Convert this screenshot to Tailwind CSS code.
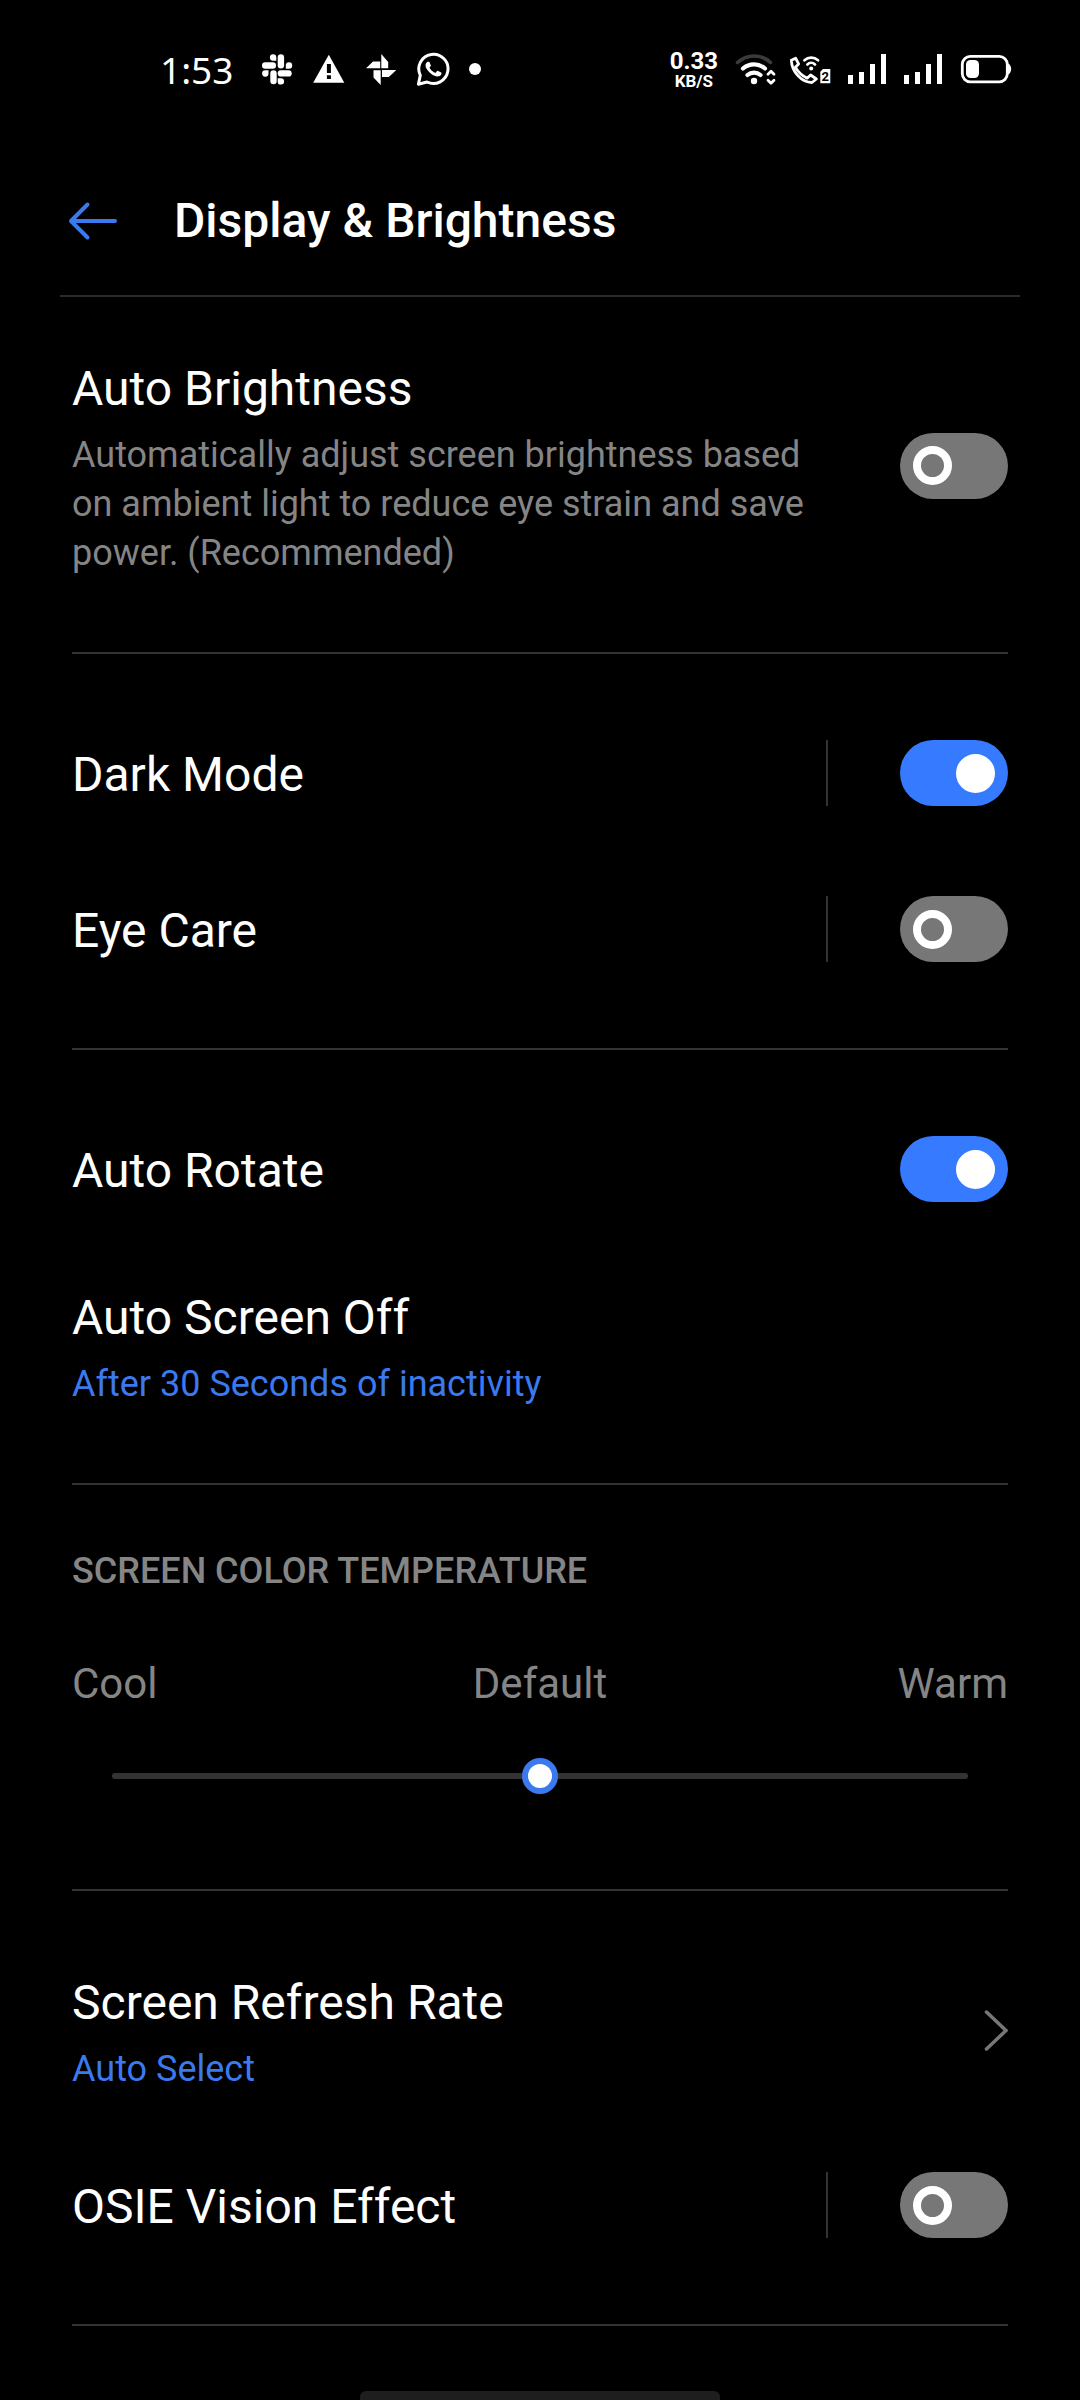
<!DOCTYPE html>
<html lang="en">
<head>
<meta charset="utf-8">
<meta name="viewport" content="width=device-width, initial-scale=1">
<title>Display &amp; Brightness</title>
<script src="https://cdn.jsdelivr.net/npm/@tailwindcss/browser@4"></script>
</head>
<body class="bg-black text-white font-[Roboto,sans-serif]">
<div class="flex min-h-screen flex-col">

  <!-- Status bar -->
  <div class="flex h-[140px] items-center justify-between pl-[160px] pr-[68px]">
    <div class="flex items-center gap-4">
      <time class="mr-2.5 font-['Noto_Sans',sans-serif] text-[37px] leading-9">1:53</time>
      <svg class="size-9" viewBox="0 0 36 36" fill="#fff" aria-label="Slack">
        <rect x="18.7" y="2.3" width="6.4" height="14.2" rx="3.2"/>
        <rect x="3" y="10.3" width="14" height="6.4" rx="3.2"/>
        <rect x="11.3" y="18.3" width="6.4" height="14" rx="3.2"/>
        <rect x="18.7" y="18.3" width="14" height="6.2" rx="3.1"/>
        <path d="M17.3 8.7h-2.8a3.2 3.2 0 1 1 2.8-3.2zM9.5 18.3v3a3.2 3.2 0 1 1-3.2-3zM26.8 16.7v-3a3.2 3.2 0 1 1 3.2 3zM18.7 26.2h3a3.2 3.2 0 1 1-3 3.2z"/>
      </svg>
      <svg class="size-9" viewBox="0 0 36 36" aria-label="Warning">
        <path fill="#fff" d="M17.8 2.7 33.3 30.7H2.2z"/>
        <path fill="#000" d="M15.9 12h4v9h-4zM15.9 23.2h4v3.8h-4z"/>
      </svg>
      <svg class="size-9" viewBox="0 0 36 36" fill="#fff" aria-label="Photos">
        <path d="M18.3 2l6.9 8v6.3h-6.9zM3 16.3l7-6.8h7.2v6.8zM17.7 33l-7.2-7.5v-7.2h7.2zM33.3 18l-7.5 7H19v-7z"/>
      </svg>
      <svg class="size-9" viewBox="0 0 36 36" aria-label="WhatsApp">
        <path fill="none" stroke="#fff" stroke-width="3" stroke-linejoin="round" d="M3.4 32.2 5.3 23.3A14.6 14.6 0 1 1 12 30z"/>
        <path fill="#fff" transform="translate(2.6 1.2) scale(1.32)" d="M17.472 14.382c-.297-.149-1.758-.867-2.03-.967-.273-.099-.471-.148-.67.15-.197.297-.767.966-.94 1.164-.173.199-.347.223-.644.075-.297-.15-1.255-.463-2.39-1.475-.883-.788-1.48-1.761-1.653-2.059-.173-.297-.018-.458.13-.606.134-.133.298-.347.446-.52.149-.174.198-.298.298-.497.099-.198.05-.371-.025-.52-.075-.149-.669-1.612-.916-2.207-.242-.579-.487-.5-.669-.51-.173-.008-.371-.01-.57-.01-.198 0-.52.074-.792.372-.272.297-1.04 1.016-1.04 2.479 0 1.462 1.065 2.875 1.213 3.074.149.198 2.096 3.2 5.077 4.487.709.306 1.262.489 1.694.625.712.227 1.36.195 1.871.118.571-.085 1.758-.719 2.006-1.413.248-.694.248-1.289.173-1.413-.074-.124-.272-.198-.57-.347"/>
      </svg>
      <svg class="h-9 w-4" viewBox="0 0 16 36" fill="#fff" aria-label="More notifications"><circle cx="8" cy="17" r="6"/></svg>
    </div>
    <div class="flex items-center gap-3.5">
      <div class="flex flex-col items-center font-bold">
        <span class="text-[24px] leading-[22px]">0.33</span>
        <span class="text-[17px] leading-[18px]">KB/S</span>
      </div>
      <svg class="h-9 w-11" viewBox="0 0 44 36" fill="none" stroke="#fff" stroke-width="3" stroke-linecap="round" aria-label="Wi-Fi">
        <path stroke="#3a3a3a" stroke-width="3.6" d="M5.5 10.5A24 24 0 0 1 38.5 10.5"/>
        <path stroke-width="4.2" d="M11 16.5A17 17 0 0 1 33 16.5M15.5 23A10 10 0 0 1 28.5 23"/>
        <circle cx="22" cy="29" r="3.2" fill="#fff" stroke="none"/>
        <path stroke-width="2.8" stroke-linejoin="round" d="M36 22.3l3-3 3 3M36 28.2l3 3 3-3"/>
      </svg>
      <svg class="h-9 w-11" viewBox="0 0 44 36" fill="none" stroke="#fff" stroke-width="2.8" stroke-linecap="round" stroke-linejoin="round" aria-label="Wi-Fi calling, SIM 2">
        <path d="M1.4 8.2 5.6 6.2 8.6 12 5.4 15.2M1.4 8.2C1.6 19 11 30.5 22 30.5L26.4 27 20.6 23 17.2 26.2C12.5 24 8 20 5.4 15.2"/>
        <path d="M14.5 8.2a10 10 0 0 1 13.500 0M17.400 12.400a5.500 5.500 0 0 1 7.600 0"/>
        <circle cx="21.2" cy="16.5" r="2" fill="#fff" stroke="none"/>
        <path fill="#fff" stroke="none" d="M33 17h7.300v14.300H30.300V19.700z"/>
        <text x="35.3" y="29" text-anchor="middle" fill="#000" stroke="none" font-size="13" font-weight="700">2</text>
      </svg>
      <svg class="h-9 w-[42px]" viewBox="0 0 42 36" fill="#fff" aria-label="SIM 1 signal">
        <path d="M0 23h5v9H0zM11 20h5v12h-5zM22 12h5v20h-5zM33 2h5v30h-5z"/>
      </svg>
      <svg class="h-9 w-[42px]" viewBox="0 0 42 36" fill="#fff" aria-label="SIM 2 signal">
        <path d="M0 23h5v9H0zM11 20h5v12h-5zM22 12h5v20h-5zM33 2h5v30h-5z"/>
      </svg>
      <svg class="h-9 w-[52px]" viewBox="0 0 52 36" aria-label="Battery">
        <rect x="2.3" y="4.3" width="45" height="25.5" rx="8" fill="none" stroke="#fff" stroke-width="2.8"/>
        <rect x="6" y="8" width="13" height="18" rx="4.5" fill="#fff"/>
        <path fill="#fff" d="M48 11.500c4.200 1.500 4.200 9.500 0 11z"/>
      </svg>
    </div>
  </div>

  <!-- Title bar -->
  <header class="mx-[60px] flex h-[157px] items-center gap-14 border-b-2 border-[#2a2a2a] pt-[6px] pl-2">
    <button type="button" aria-label="Back">
      <svg class="h-10 w-[50px]" viewBox="0 0 50 40" fill="none" stroke="#3b7aee" stroke-width="4" stroke-linecap="round" stroke-linejoin="round"><path d="M19.500 3.500 3 20l16.500 16.500M3 20h44"/></svg>
    </button>
    <h1 class="text-[48px] leading-18 font-medium">Display &amp; Brightness</h1>
  </header>

  <main class="mx-[72px]">
    <section class="border-b-2 border-[#333] pt-[21px] pb-[41px]">
      <div class="flex items-center justify-between pt-[35px] pb-[33px]">
        <div>
          <label for="auto-brightness" class="block text-[48px] leading-18">Auto Brightness</label>
          <p class="mt-1.5 max-w-[756px] text-[36px] leading-[49px] text-[#858585]">Automatically adjust screen brightness based on ambient light to reduce eye strain and save power. (Recommended)</p>
        </div>
        <input id="auto-brightness" type="checkbox" role="switch" class="flex h-[66px] w-[108px] shrink-0 appearance-none items-center rounded-full bg-[#777] px-[13px] before:size-[39px] before:rounded-full before:border-8 before:border-white before:content-[''] checked:justify-end checked:bg-[#357aff] checked:before:bg-white">
      </div>
    </section>

    <section class="border-b-2 border-[#333] py-[41px]">
      <div class="flex h-[156px] items-center">
        <label for="dark-mode" class="grow pt-[3px] text-[48px] leading-18">Dark Mode</label>
        <div class="flex border-l-2 border-[#333] pl-18">
          <input id="dark-mode" type="checkbox" role="switch" checked class="flex h-[66px] w-[108px] shrink-0 appearance-none items-center rounded-full bg-[#777] px-[13px] before:size-[39px] before:rounded-full before:border-8 before:border-white before:content-[''] checked:justify-end checked:bg-[#357aff] checked:before:bg-white">
        </div>
      </div>
      <div class="flex h-[156px] items-center">
        <label for="eye-care" class="grow pt-[3px] text-[48px] leading-18">Eye Care</label>
        <div class="flex border-l-2 border-[#333] pl-18">
          <input id="eye-care" type="checkbox" role="switch" class="flex h-[66px] w-[108px] shrink-0 appearance-none items-center rounded-full bg-[#777] px-[13px] before:size-[39px] before:rounded-full before:border-8 before:border-white before:content-[''] checked:justify-end checked:bg-[#357aff] checked:before:bg-white">
        </div>
      </div>
    </section>

    <section class="border-b-2 border-[#333] py-[41px]">
      <div class="flex h-[156px] items-center">
        <label for="auto-rotate" class="grow pt-[3px] text-[48px] leading-18">Auto Rotate</label>
        <input id="auto-rotate" type="checkbox" role="switch" checked class="flex h-[66px] w-[108px] shrink-0 appearance-none items-center rounded-full bg-[#777] px-[13px] before:size-[39px] before:rounded-full before:border-8 before:border-white before:content-[''] checked:justify-end checked:bg-[#357aff] checked:before:bg-white">
      </div>
      <a href="#auto-screen-off" class="block pt-[35px] pb-[33px]">
        <span class="block text-[48px] leading-18">Auto Screen Off</span>
        <span class="mt-1.5 block text-[36px] leading-[49px] text-[#3b7aee]">After 30 Seconds of inactivity</span>
      </a>
    </section>

    <section class="border-b-2 border-[#333] pt-[62px] pb-[95px]">
      <h2 class="text-[36px] leading-12 font-medium text-[#858585]"><label for="temperature">SCREEN COLOR TEMPERATURE</label></h2>
      <div class="mt-[61px] grid grid-cols-3 text-[42px] leading-14 text-[#858585]">
        <span>Cool</span>
        <span class="text-center">Default</span>
        <span class="text-right">Warm</span>
      </div>
      <div class="mx-10 mt-[46px] flex">
        <input id="temperature" type="range" min="0" max="100" value="50" class="h-9 w-full appearance-none bg-transparent [&::-webkit-slider-runnable-track]:h-1.5 [&::-webkit-slider-runnable-track]:rounded-full [&::-webkit-slider-runnable-track]:bg-[#333] [&::-webkit-slider-thumb]:-mt-[15px] [&::-webkit-slider-thumb]:size-9 [&::-webkit-slider-thumb]:appearance-none [&::-webkit-slider-thumb]:rounded-full [&::-webkit-slider-thumb]:border-6 [&::-webkit-slider-thumb]:border-[#3b7aee] [&::-webkit-slider-thumb]:bg-white">
      </div>
    </section>

    <section class="border-b-2 border-[#333] py-[41px]">
      <a href="#refresh-rate" class="flex items-center justify-between pt-[35px] pb-[33px]">
        <span>
          <span class="block text-[48px] leading-18">Screen Refresh Rate</span>
          <span class="mt-1.5 block text-[36px] leading-[49px] text-[#3b7aee]">Auto Select</span>
        </span>
        <svg class="h-11 w-6" viewBox="0 0 24 44" fill="none" stroke="#777" stroke-width="3.5" stroke-linecap="round"><path d="M2.500 3 22 21.500 2.500 40"/></svg>
      </a>
      <div class="flex h-[156px] items-center">
        <label for="osie" class="grow pt-[3px] text-[48px] leading-18">OSIE Vision Effect</label>
        <div class="flex border-l-2 border-[#333] pl-18">
          <input id="osie" type="checkbox" role="switch" class="flex h-[66px] w-[108px] shrink-0 appearance-none items-center rounded-full bg-[#777] px-[13px] before:size-[39px] before:rounded-full before:border-8 before:border-white before:content-[''] checked:justify-end checked:bg-[#357aff] checked:before:bg-white">
        </div>
      </div>
    </section>
  </main>

  <!-- Gesture bar -->
  <div class="mt-auto h-[9px] w-1/3 self-center rounded-t-md bg-[#1e1e1e]"></div>
</div>
</body>
</html>
